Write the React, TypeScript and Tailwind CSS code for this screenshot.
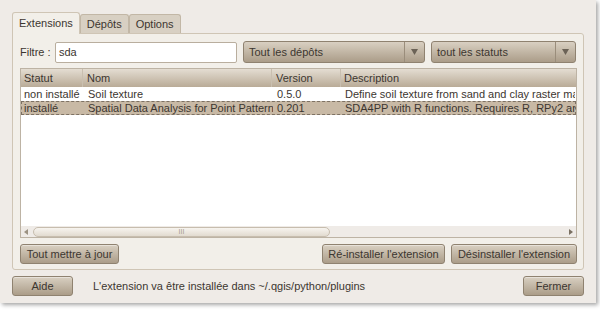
import React from 'react'

const font = { fontFamily: '"Liberation Sans", "DejaVu Sans", sans-serif' }

function Btn({ label, className = '' }: { label: string; className?: string }) {
  return (
    <button className={`h-[20px] rounded-[3px] border border-[#8f8270] bg-gradient-to-b from-[#d9d0c2] to-[#ab9d89] text-[11px] text-[#3c3630] shadow-[inset_0_1px_0_rgba(255,255,255,0.4)] ${className}`}>
      {label}
    </button>
  )
}

function Combo({ label, className = '' }: { label: string; className?: string }) {
  return (
    <div className={`flex h-[22px] rounded-[3px] border border-[#8f8270] bg-gradient-to-b from-[#d9d0c2] to-[#ab9d89] text-[11px] text-[#3c3630] ${className}`}>
      <div className="flex-1 flex items-center pl-[5px]">{label}</div>
      <div className="w-[20px] flex items-center justify-center border-l border-[#9a8d7b]">
        <svg width="7" height="6" viewBox="0 0 7 6"><path d="M0 0 H7 L3.5 6 Z" fill="#6b6256" /></svg>
      </div>
    </div>
  )
}

const rows = [
  { statut: 'non installé', nom: 'Soil texture', version: '0.5.0', desc: 'Define soil texture from sand and clay raster maps', sel: false },
  { statut: 'installé', nom: 'Spatial Data Analysis for Point Pattern', version: '0.201', desc: 'SDA4PP with R functions. Requires R, RPy2 and R packages', sel: true },
]

export default function App() {
  return (
    <div className="w-[600px] h-[310px] bg-white" style={font}>
      <div className="w-[596px] h-[303px] bg-[#efebe7] shadow-[2px_2px_4px_rgba(0,0,0,0.35)] px-[12px] pt-[12px] flex flex-col text-[#3c3630]">
        {/* tabs */}
        <div className="flex text-[11px] h-[21px] items-end">
          <div className="h-[22px] px-[6px] flex items-center bg-[#f2efe9] border border-b-0 border-[#cfc5b5] rounded-t-[3px] relative top-[1px] z-10">Extensions</div>
          <div className="h-[19px] px-[6px] flex items-center bg-[#d8d0c3] border border-b-0 border-[#c2b7a6] rounded-t-[3px]">Dépôts</div>
          <div className="h-[19px] px-[6px] flex items-center bg-[#d8d0c3] border border-b-0 border-[#c2b7a6] rounded-t-[3px]">Options</div>
        </div>
        <div className="h-[237px] border border-[#cfc5b5] rounded-b-[3px] rounded-tr-[3px] bg-[#f2efe9] px-[7px] pt-[7px] flex flex-col">
          {/* filter row */}
          <div className="flex items-center h-[22px] text-[11px]">
            <span className="w-[35px]">Filtre :</span>
            <div className="w-[182px] h-[21px] bg-white border border-[#b9ae9e] rounded-[2px] flex items-center pl-[3px]">sda</div>
            <Combo label="Tout les dépôts" className="ml-[6px] w-[182px]" />
            <Combo label="tout les statuts" className="ml-[6px] w-[145px]" />
          </div>
          {/* table */}
          <div className="mt-[5px] w-[557px] h-[170px] border border-[#bdb3a4] bg-white flex flex-col text-[11px]">
            <div className="h-[18px] flex bg-gradient-to-b from-[#e4ddd2] to-[#b9ab97]">
              <div className="w-[62px] pl-[3px] flex items-center border-r border-[#c9bfb0]">Statut</div>
              <div className="w-[189px] pl-[4px] flex items-center border-r border-[#c9bfb0]">Nom</div>
              <div className="w-[69px] pl-[4px] flex items-center border-r border-[#c9bfb0]">Version</div>
              <div className="flex-1 pl-[3px] flex items-center">Description</div>
            </div>
            <div className="flex-1 overflow-hidden">
              {rows.map(r => (
                <div key={r.nom} className={`h-[14px] flex whitespace-nowrap ${r.sel ? 'bg-[#c8b9a5] border border-dashed border-[#7d7163]' : 'border border-transparent'}`}>
                  <div className="w-[62px] pl-[2px] overflow-hidden leading-[12px]">{r.statut}</div>
                  <div className="w-[189px] pl-[4px] overflow-hidden leading-[12px]">{r.nom}</div>
                  <div className="w-[69px] pl-[4px] overflow-hidden leading-[12px]">{r.version}</div>
                  <div className="flex-1 pl-[3px] overflow-hidden leading-[12px]">{r.desc}</div>
                </div>
              ))}
            </div>
            {/* h scrollbar */}
            <div className="h-[11px] flex items-center bg-[#efebe7] px-[2px]">
              <svg width="6" height="6" viewBox="0 0 6 6"><path d="M5 0 V6 L1 3 Z" fill="#9c9282" /></svg>
              <div className="ml-[4px] w-[297px] h-[10px] rounded-[5px] border border-[#c7bdae] bg-gradient-to-b from-[#f7f4ef] to-[#e2dbd0] flex items-center justify-center">
                <span className="text-[7px] text-[#a69b8b] leading-none">III</span>
              </div>
              <div className="flex-1" />
              <svg width="6" height="6" viewBox="0 0 6 6"><path d="M1 0 V6 L5 3 Z" fill="#7a7062" /></svg>
            </div>
          </div>
          {/* actions */}
          <div className="mt-[6px] flex w-[557px]">
            <Btn label="Tout mettre à jour" className="w-[99px]" />
            <div className="flex-1" />
            <Btn label="Ré-installer l'extension" className="w-[123px]" />
            <Btn label="Désinstaller l'extension" className="ml-[6px] w-[126px]" />
          </div>
        </div>
        {/* bottom */}
        <div className="mt-[6px] flex items-center text-[11px]">
          <Btn label="Aide" className="w-[61px]" />
          <span className="ml-[20px]">L'extension va être installée dans ~/.qgis/python/plugins</span>
          <div className="flex-1" />
          <Btn label="Fermer" className="w-[61px]" />
        </div>
      </div>
    </div>
  )
}
